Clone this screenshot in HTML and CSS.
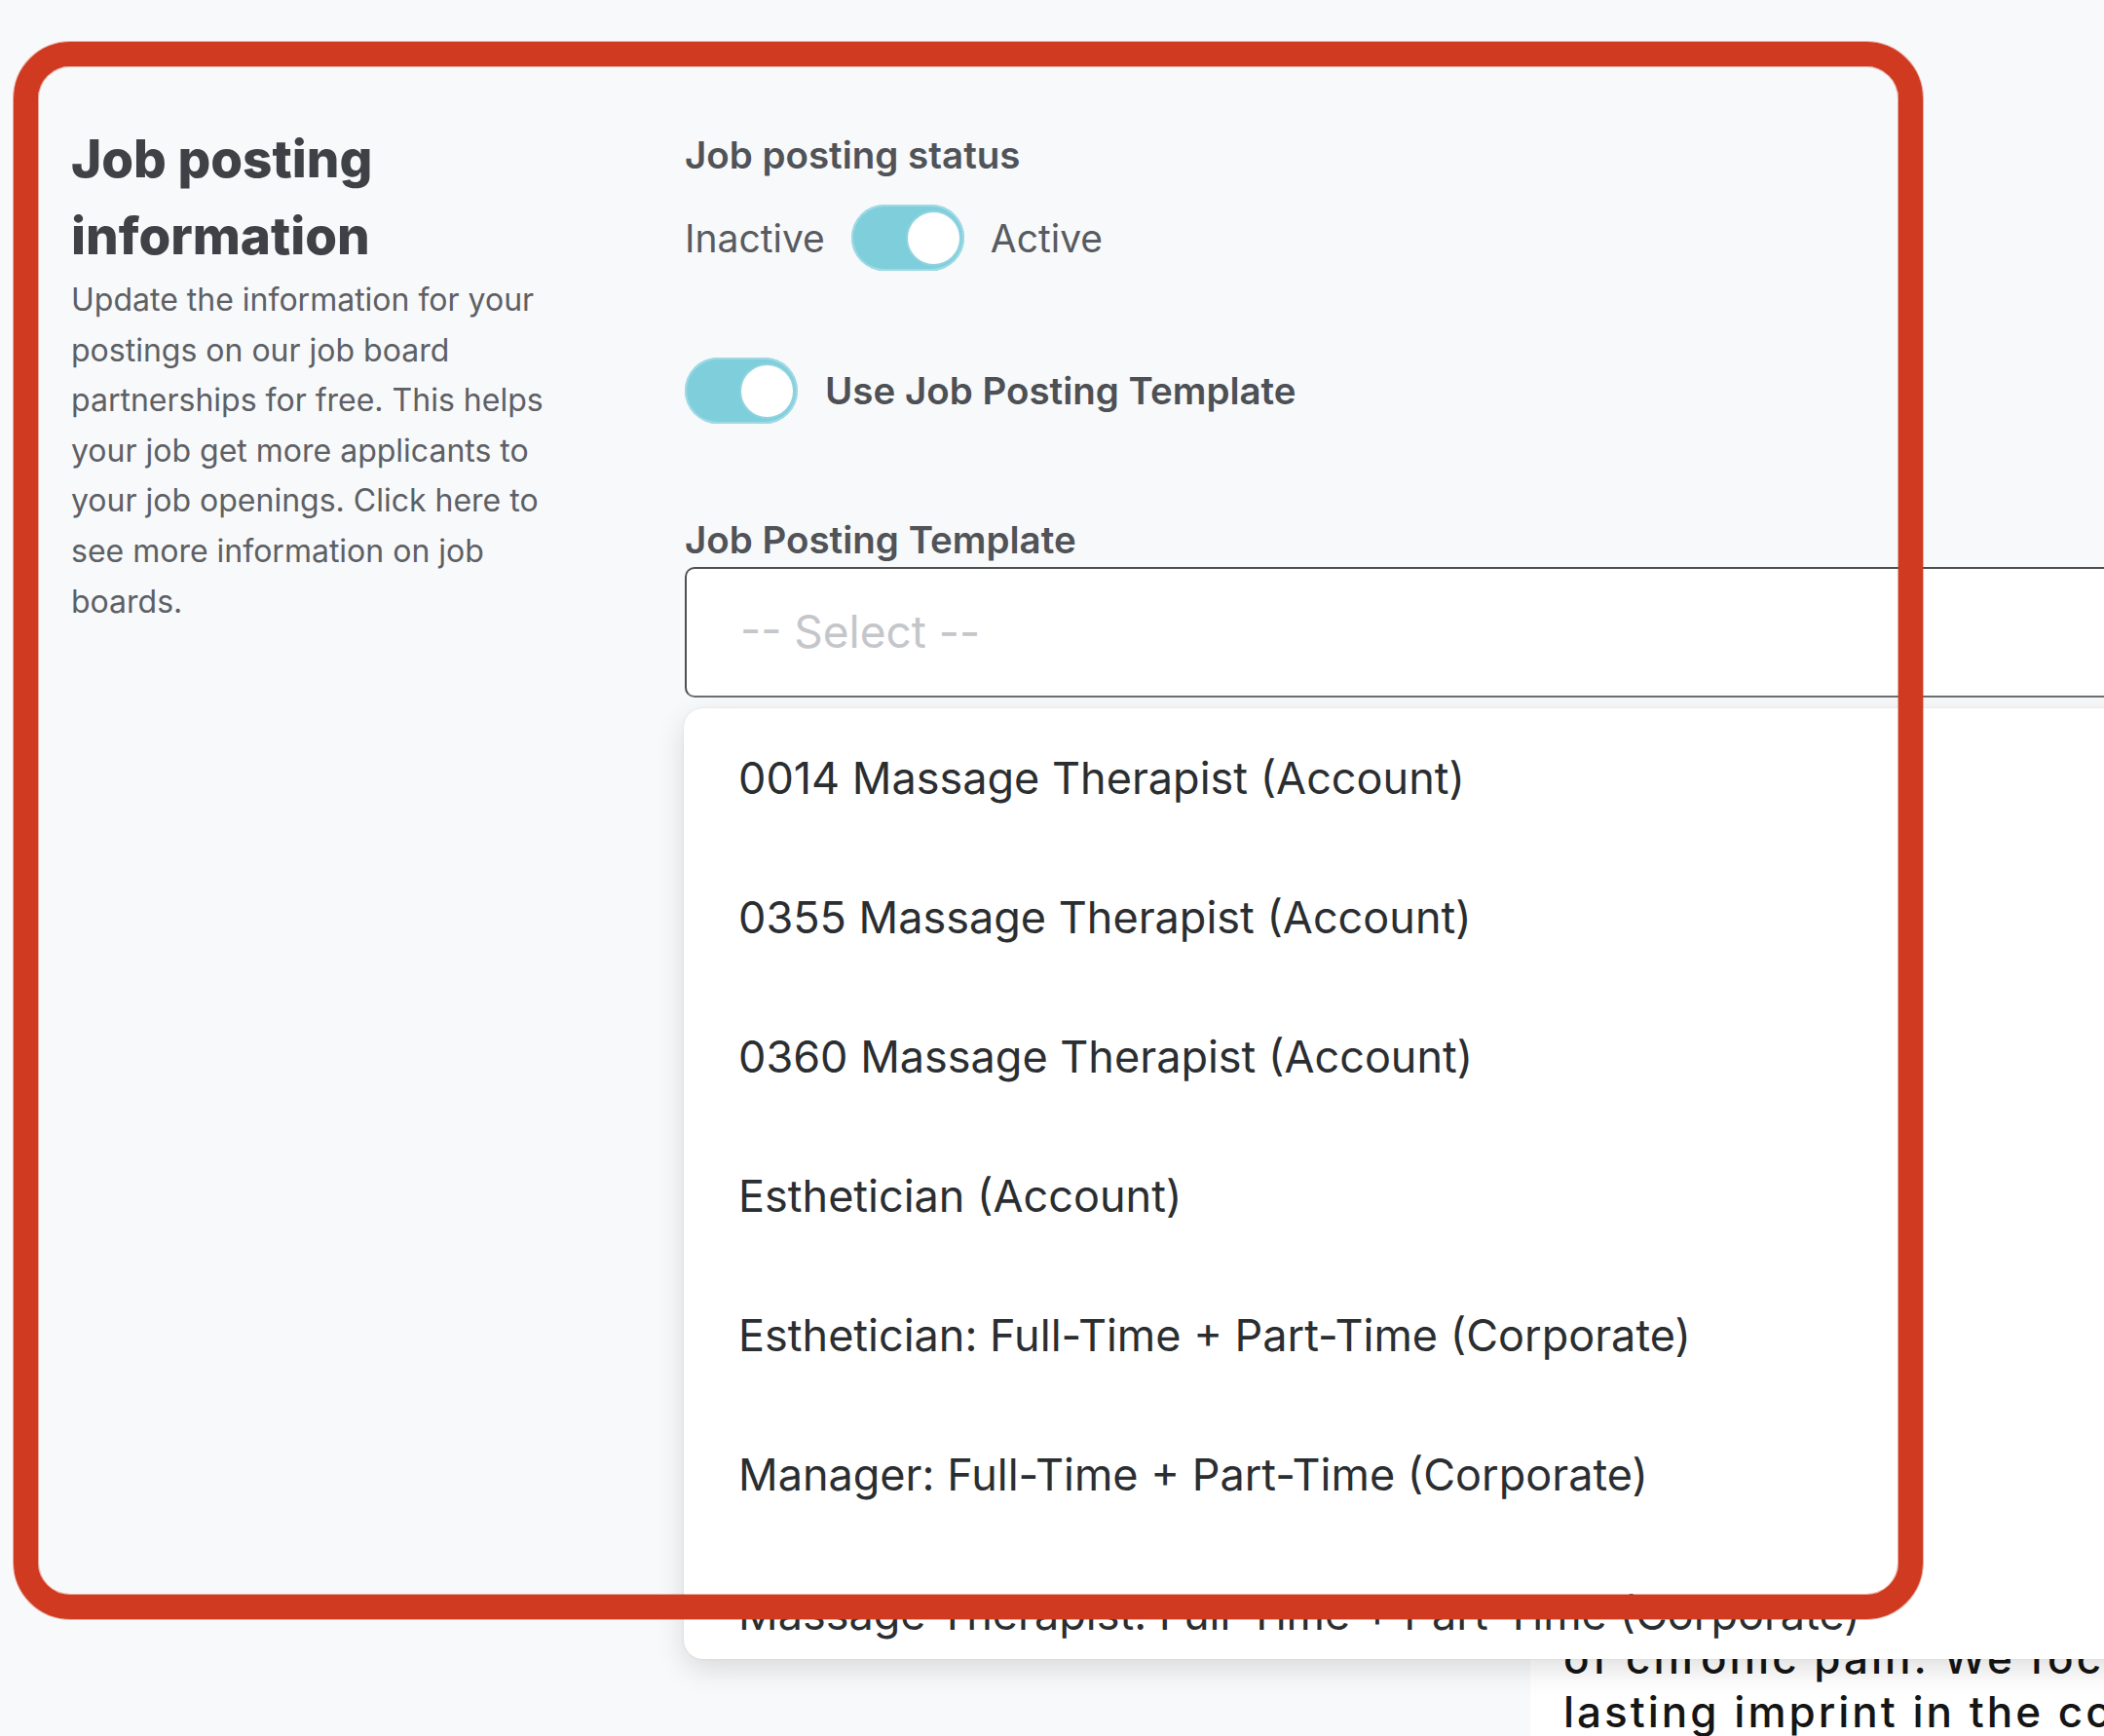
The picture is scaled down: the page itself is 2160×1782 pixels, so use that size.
FILE: index.html
```html
<!DOCTYPE html>
<html lang="en">
<head>
    <meta charset="UTF-8">
    <meta name="viewport" content="width=device-width, initial-scale=1.0">
    <title>Job posting information</title>
    <link rel="stylesheet" href="styles.css">
</head>
<body>

    <main class="page">
        <section class="settings">
            <!-- Colonne de gauche -->
            <div class="intro">
                <h2>Job posting information</h2>
                <p>Update the information for your postings on our job board partnerships for free. This helps your job get more applicants to your job openings. Click here to see more information on job boards.</p>
            </div>

            <!-- Colonne de droite -->
            <div class="fields">
                <div class="field-label">Job posting status</div>
                <div class="status-row">
                    <span>Inactive</span>
                    <span class="toggle"><span class="knob"></span></span>
                    <span>Active</span>
                </div>

                <div class="template-row">
                    <span class="toggle"><span class="knob"></span></span>
                    <span class="template-text">Use Job Posting Template</span>
                </div>

                <label class="field-label template-label">Job Posting Template</label>
                <div class="select-wrap">
                    <div class="select">-- Select --</div>
                    <ul class="dropdown">
                        <li>0014 Massage Therapist (Account)</li>
                        <li>0355 Massage Therapist (Account)</li>
                        <li>0360 Massage Therapist (Account)</li>
                        <li>Esthetician (Account)</li>
                        <li>Esthetician: Full-Time + Part-Time (Corporate)</li>
                        <li>Manager: Full-Time + Part-Time (Corporate)</li>
                        <li>Massage Therapist: Full-Time + Part-Time (Corporate)</li>
                    </ul>
                </div>
            </div>
        </section>

        <section class="preview">
            <p>stress and tension, or the relief<br>of chronic pain. We focus on leaving a<br>lasting imprint in the communities we serve.</p>
        </section>
    </main>

    <div class="annotation"></div>

</body>
</html>
```

FILE: styles.css
```css
html, body { margin: 0; height: 100%; overflow: hidden; }
body { background: #f8f9fa; font-family: Inter, "Noto Sans", sans-serif; color: #3e4145; }

.settings { display: grid; grid-template-columns: 515px 1fr; column-gap: 115px; padding: 124px 0 0 73px; height: 1590px; box-sizing: border-box; }

.intro h2 { margin: 0; font-size: 53px; line-height: 79px; font-weight: 800; color: #3e4145; }
.intro p { margin: 0; font-size: 32px; line-height: 51.6px; color: #5d6065; }

.field-label { display: block; margin-top: 12px; font-size: 38.5px; line-height: 46px; font-weight: 600; color: #505358; }

.status-row { display: flex; align-items: center; gap: 27px; margin-top: 28px; font-size: 39px; color: #585b60; }
.template-row { display: flex; align-items: center; gap: 28px; margin-top: 89px; }
.template-text { font-size: 38.5px; font-weight: 600; color: #4d5055; }
.template-label { margin-top: 96px; }

.toggle { display: flex; align-items: center; justify-content: flex-end; width: 116px; height: 68px; padding: 0 5px; box-sizing: border-box; border-radius: 34px; background: #7fcedc; box-shadow: inset 0 0 0 2px #9fdae5; }
.knob { width: 53px; height: 53px; border-radius: 50%; background: #fff; box-shadow: 0 0 0 2px #8fd3df; }

.select-wrap { position: relative; margin-top: 5px; width: 1600px; }
.select { height: 134px; box-sizing: border-box; display: flex; align-items: center; padding-left: 55px; padding-bottom: 3px; border: 2px solid #4f4f4f; border-bottom-color: #6e6e6e; border-radius: 10px; background: #fff; font-size: 46px; color: #c4c6c9; }

.dropdown { position: absolute; top: 145px; left: -1px; width: 1600px; height: 976px; margin: 0; padding: 0; list-style: none; overflow: hidden; background: #fff; border-radius: 20px; box-shadow: 0 10px 30px rgba(0, 0, 0, 0.13), 0 0 3px rgba(0, 0, 0, 0.08); z-index: 2; }
.dropdown li { display: flex; align-items: center; height: 143px; padding-left: 56px; font-size: 45px; color: #2b2e31; }

.preview { margin-left: 1571px; padding: 30px 0 0 34px; height: 400px; background: #fff; }
.preview p { margin: 0; font-size: 44px; line-height: 55px; letter-spacing: 3px; font-weight: 500; color: #151515; white-space: nowrap; }

/* cadre rouge d'annotation */
.annotation { position: absolute; left: 14px; top: 43px; width: 1960px; height: 1619px; box-sizing: border-box; border: 25px solid #d03a21; border-radius: 58px; box-shadow: 0 0 0 1px rgba(208, 58, 33, 0.4), inset 0 0 0 1px rgba(208, 58, 33, 0.4); pointer-events: none; z-index: 5; }
```
